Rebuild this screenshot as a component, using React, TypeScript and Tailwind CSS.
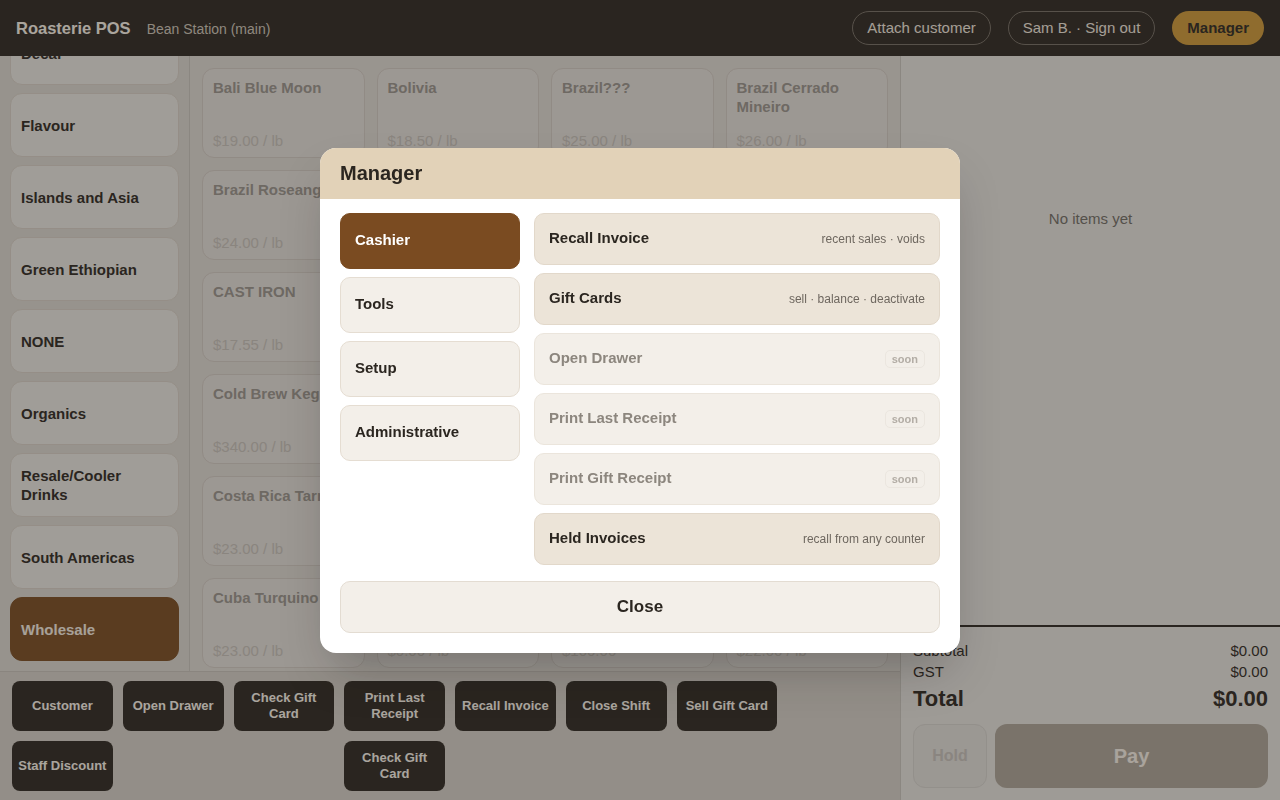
import React from "react";

const categories = [
  "All",
  "Blends",
  "Decaf",
  "Flavour",
  "Islands and Asia",
  "Green Ethiopian",
  "NONE",
  "Organics",
  "Resale/Cooler Drinks",
  "South Americas",
  "Wholesale",
];

const products: [string, string][] = [
  ["Bali Blue Moon", "$19.00 / lb"],
  ["Bolivia", "$18.50 / lb"],
  ["Brazil???", "$25.00 / lb"],
  ["Brazil Cerrado Mineiro", "$26.00 / lb"],
  ["Brazil Roseangela", "$24.00 / lb"],
  ["Brazil Santos", "$21.00 / lb"],
  ["Burundi Kayanza", "$24.50 / lb"],
  ["Cameroon Boyo", "$22.00 / lb"],
  ["CAST IRON", "$17.55 / lb"],
  ["Chemex Filters", "$14.00"],
  ["Chiapas Mexico", "$21.00 / lb"],
  ["Cold Brew Concentrate", "$18.00"],
  ["Cold Brew Keg", "$340.00 / lb"],
  ["Colombia Huila", "$22.00 / lb"],
  ["Colombia Supremo", "$21.50 / lb"],
  ["Congo Kivu", "$24.00 / lb"],
  ["Costa Rica Tarrazu", "$23.00 / lb"],
  ["Cream Soda", "$3.50"],
  ["Crema Espresso", "$20.00 / lb"],
  ["Crown Blend", "$19.50 / lb"],
  ["Cuba Turquino", "$23.00 / lb"],
  ["Decaf Colombia", "$0.00 / lb"],
  ["Drip Brewer", "$100.00"],
  ["El Salvador", "$22.00 / lb"],
  ["Ethiopia Guji", "$25.00 / lb"],
  ["Ethiopia Sidamo", "$24.00 / lb"],
  ["Ethiopia Yirgacheffe", "$26.00 / lb"],
  ["French Roast", "$20.00 / lb"],
];

type Action = { label: string; col: number; row: number };

const actions: Action[] = [
  { label: "Customer", col: 1, row: 1 },
  { label: "Open Drawer", col: 2, row: 1 },
  { label: "Check Gift Card", col: 3, row: 1 },
  { label: "Print Last Receipt", col: 4, row: 1 },
  { label: "Recall Invoice", col: 5, row: 1 },
  { label: "Close Shift", col: 6, row: 1 },
  { label: "Sell Gift Card", col: 7, row: 1 },
  { label: "Staff Discount", col: 1, row: 2 },
  { label: "Check Gift Card", col: 4, row: 2 },
];

const colClass: Record<number, string> = {
  1: "col-start-1",
  2: "col-start-2",
  3: "col-start-3",
  4: "col-start-4",
  5: "col-start-5",
  6: "col-start-6",
  7: "col-start-7",
};
const rowClass: Record<number, string> = { 1: "row-start-1", 2: "row-start-2" };

const managerItems: { label: string; desc?: string; soon?: boolean }[] = [
  { label: "Recall Invoice", desc: "recent sales · voids" },
  { label: "Gift Cards", desc: "sell · balance · deactivate" },
  { label: "Open Drawer", soon: true },
  { label: "Print Last Receipt", soon: true },
  { label: "Print Gift Receipt", soon: true },
  { label: "Held Invoices", desc: "recall from any counter" },
];

const tabs = ["Cashier", "Tools", "Setup", "Administrative"];

export default function App() {
  return (
    <div className="relative flex h-[800px] w-[1280px] flex-col overflow-hidden bg-[#ebe9e5] font-['Liberation_Sans',Arial,sans-serif] text-[#2b2620]">
      {/* Header */}
      <header className="z-10 flex h-14 shrink-0 items-center justify-between bg-[#2b2620] px-4">
        <div className="flex items-baseline gap-4">
          <span className="text-[16.5px] font-bold text-[#fffaf0]">Roasterie POS</span>
          <span className="text-[14px] text-[#d2cabe]">Bean Station (main)</span>
        </div>
        <div className="flex items-center gap-[17px]">
          <button className="h-[34px] rounded-full border border-[#756e66] px-[14px] text-[15px] text-[#f7eee3]">
            Attach customer
          </button>
          <button className="h-[34px] rounded-full border border-[#756e66] px-[14px] text-[15px] text-[#f7eee3]">
            Sam B. · Sign out
          </button>
          <button className="h-[34px] rounded-full bg-[#d29c37] px-[15px] text-[15px] font-bold text-[#2b2620]">
            Manager
          </button>
        </div>
      </header>

      <div className="flex min-h-0 flex-1">
        {/* Left main */}
        <div className="flex w-[900px] shrink-0 flex-col">
          <div className="flex min-h-0 flex-1">
            {/* Categories */}
            <div className="flex w-[190px] shrink-0 flex-col justify-end gap-2 overflow-hidden border-r border-[#cbc8c1] bg-[#dfdcd5] p-[10px]">
              {categories.map((c) => {
                const active = c === "Wholesale";
                return (
                  <div
                    key={c}
                    className={
                      active
                        ? "flex h-16 shrink-0 items-center rounded-[12px] border border-[#7a4b21] bg-[#7a4b21] px-[10px] text-[15px] font-bold leading-[19px] text-[#fbf3e8]"
                        : "flex h-16 shrink-0 items-center rounded-[12px] border border-[#dcd4cb] bg-[#eeede8] px-[10px] text-[15px] font-bold leading-[19px] text-[#2b2620]"
                    }
                  >
                    {c}
                  </div>
                );
              })}
            </div>
            {/* Products */}
            <div className="grid min-w-0 flex-1 auto-rows-[90px] grid-cols-4 content-start gap-3 overflow-hidden bg-[#e3dfd9] p-3">
              {products.map(([name, price], i) => (
                <div
                  key={i}
                  className="flex flex-col justify-between rounded-[12px] border border-[#d6cfc8] bg-[#e8e4df] px-[10px] pb-[7px] pt-[9px]"
                >
                  <div className="text-[15px] font-bold leading-[19px] text-[#9b968f]">{name}</div>
                  <div className="text-[15px] leading-[19px] text-[#cac5be]">{price}</div>
                </div>
              ))}
            </div>
          </div>
          {/* Bottom action bar */}
          <div className="h-[129px] shrink-0 border-t border-[#cac5be] bg-[#d9d4cd] px-3 py-[9px]">
            <div className="grid grid-cols-8 grid-rows-[50px_50px] gap-[10px]">
              {actions.map((a, i) => (
                <div
                  key={i}
                  className={`${colClass[a.col]} ${rowClass[a.row]} flex items-center justify-center rounded-[8px] bg-[#2b2620] px-1.5 text-center text-[13px] font-bold leading-[16px] text-[#fffaf2]`}
                >
                  {a.label}
                </div>
              ))}
            </div>
          </div>
        </div>

        {/* Right cart panel */}
        <aside className="flex min-w-0 flex-1 flex-col border-l border-[#cbc8c1] bg-[#ebe9e5]">
          <div className="flex-1 pt-[152px] text-center text-[15px] text-[#716e67]">No items yet</div>
          <div className="border-t-2 border-[#2b2620] px-3 pb-3 pt-[13px]">
            <div className="flex justify-between text-[15px] leading-[21px]">
              <span>Subtotal</span>
              <span>$0.00</span>
            </div>
            <div className="flex justify-between text-[15px] leading-[21px]">
              <span>GST</span>
              <span>$0.00</span>
            </div>
            <div className="mt-[3px] flex justify-between text-[22px] font-bold leading-[28px]">
              <span>Total</span>
              <span>$0.00</span>
            </div>
            <div className="mt-[11px] flex h-16 gap-2">
              <div className="flex w-[74px] items-center justify-center rounded-[12px] border border-[#d9d7d2] bg-[#e6e4df] text-[16px] font-bold text-[#cac5c0]">
                Hold
              </div>
              <div className="flex flex-1 items-center justify-center rounded-[12px] bg-[#afa79b] text-[20px] font-bold text-[#fdf7ee]">
                Pay
              </div>
            </div>
          </div>
        </aside>
      </div>

      {/* Modal overlay */}
      <div className="fixed inset-0 z-20 flex items-center justify-center bg-[#2b2620]/40">
        <div className="w-[640px] overflow-hidden rounded-2xl bg-white shadow-2xl">
          <div className="flex h-[51px] items-center bg-[#e2d2b8] px-5 text-[20px] font-bold text-[#2b2620]">
            Manager
          </div>
          <div className="px-5 pb-5 pt-[14px]">
            <div className="flex gap-[14px]">
              <div className="flex w-[180px] shrink-0 flex-col gap-2">
                {tabs.map((t) => (
                  <div
                    key={t}
                    className={
                      t === "Cashier"
                        ? "flex h-14 items-center rounded-[10px] border border-[#7a4b21] bg-[#7a4b21] px-[14px] text-[15px] font-bold text-white"
                        : "flex h-14 items-center rounded-[10px] border border-[#e5ddd2] bg-[#f3efe9] px-[14px] text-[15px] font-bold text-[#2b2620]"
                    }
                  >
                    {t}
                  </div>
                ))}
              </div>
              <div className="flex flex-1 flex-col gap-2">
                {managerItems.map((m) => (
                  <div
                    key={m.label}
                    className={
                      m.soon
                        ? "flex h-[52px] items-center justify-between rounded-[10px] border border-[#ebe5dc] bg-[#f3efe9] px-[14px]"
                        : "flex h-[52px] items-center justify-between rounded-[10px] border border-[#e2d8ca] bg-[#ece4d8] px-[14px]"
                    }
                  >
                    <span
                      className={
                        m.soon
                          ? "text-[15px] font-bold text-[#8c867e]"
                          : "text-[15px] font-bold text-[#2b2620]"
                      }
                    >
                      {m.label}
                    </span>
                    {m.soon ? (
                      <span className="rounded-[5px] border border-[#ebe6df] px-[6px] text-[11px] font-bold leading-[16px] text-[#b3ada5]">
                        soon
                      </span>
                    ) : (
                      <span className="text-[12px] text-[#6e675f]">{m.desc}</span>
                    )}
                  </div>
                ))}
              </div>
            </div>
            <div className="mt-4 flex h-[52px] items-center justify-center rounded-[10px] border border-[#e3dcd2] bg-[#f3efe9] text-[17px] font-bold text-[#2b2620]">
              Close
            </div>
          </div>
        </div>
      </div>
    </div>
  );
}
